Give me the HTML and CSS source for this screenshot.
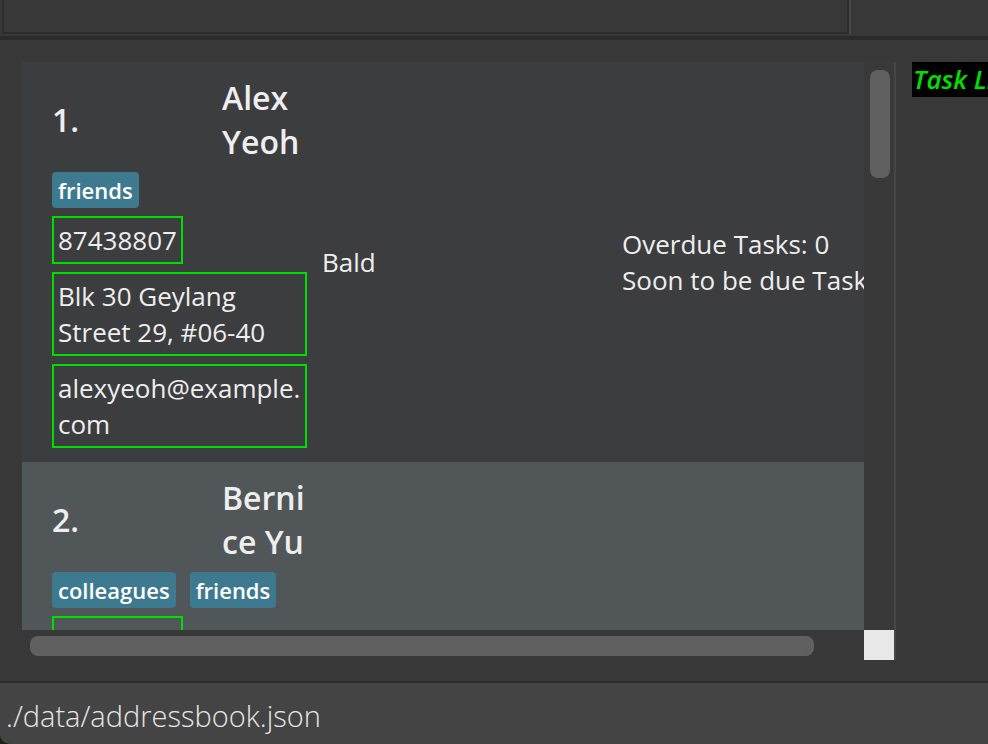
FILE: index.html
```html
<!DOCTYPE html>
<html>
<head>
<meta charset="utf-8">
<link rel="stylesheet" href="styles.css">
</head>
<body>
<div class="app">
  <div class="top">
    <div class="top-box"></div>
    <div class="top-divider"></div>
  </div>
  <div class="band"></div>
  <div class="main">
    <div class="list-pane">
      <div class="viewport">
        <div class="list">
          <div class="card card-odd">
            <div class="col-main">
              <div class="header">
                <div class="idx">1.</div>
                <div class="name">Alex Yeoh</div>
              </div>
              <div class="tags">
                <span class="tag">friends</span>
              </div>
              <div class="field">87438807</div>
              <div class="field">Blk 30 Geylang Street 29, #06-40</div>
              <div class="field field-mail">alexyeoh@example.<wbr>com</div>
            </div>
            <div class="col-remark">Bald</div>
            <div class="col-tasks">
              <div>Overdue Tasks: 0</div>
              <div>Soon to be due Tasks: 0</div>
            </div>
          </div>
          <div class="card card-even">
            <div class="col-main">
              <div class="header">
                <div class="idx">2.</div>
                <div class="name">Bernice Yu</div>
              </div>
              <div class="tags">
                <span class="tag">colleagues</span>
                <span class="tag">friends</span>
              </div>
              <div class="field">99272758</div>
              <div class="field">Blk 30 Lorong 3 Serangoon Gardens, #07-18</div>
              <div class="field field-mail">berniceyu@example.<wbr>com</div>
            </div>
            <div class="col-remark"></div>
            <div class="col-tasks">
              <div>Overdue Tasks: 0</div>
              <div>Soon to be due Tasks: 0</div>
            </div>
          </div>
        </div>
      </div>
      <div class="vbar"><div class="vthumb"></div></div>
      <div class="hbar"><div class="hthumb"></div></div>
      <div class="corner"></div>
    </div>
    <div class="pane-divider"></div>
    <div class="right">
      <div class="task-label">Task List</div>
    </div>
  </div>
  <div class="sep"></div>
  <div class="status">./data/addressbook.json</div>
</div>
</body>
</html>
```
FILE: styles.css
```css
* { box-sizing: border-box; }
html, body {
  margin: 0;
  padding: 0;
  background: #1b201b;
  width: 988px;
  height: 744px;
  overflow: hidden;
  font-family: "Open Sans", "DejaVu Sans", sans-serif;
}
.app {
  width: 988px;
  height: 744px;
  background: #383838;
  display: flex;
  flex-direction: column;
  border-bottom-left-radius: 10px;
  overflow: hidden;
}
.top {
  height: 34px;
  display: flex;
  flex: none;
}
.top-box {
  margin-left: 2px;
  width: 847px;
  height: 34px;
  border: 2px solid #2c2c2c;
  border-top: none;
}
.top-divider {
  width: 2px;
  height: 34px;
  background: #464646;
}
.band {
  flex: none;
  margin-top: 2px;
  height: 4px;
  background: #2b2b2b;
}
.main {
  flex: none;
  height: 641px;
  display: flex;
  padding-top: 22px;
}
.list-pane {
  margin-left: 22px;
  width: 872px;
  height: 598px;
  display: grid;
  grid-template-columns: 842px 30px;
  grid-template-rows: 568px 30px;
}
.viewport {
  overflow: hidden;
  width: 842px;
  height: 568px;
}
.list {
  width: 900px;
}
.card {
  display: flex;
  align-items: center;
  padding: 14px 0 14px 30px;
  color: #eeeeee;
}
.card-odd { background: #3c3d3f; }
.card-even { background: #515658; }
.col-main {
  width: 255px;
  flex: none;
  display: flex;
  flex-direction: column;
  gap: 8px;
}
.header {
  display: flex;
  align-items: center;
  font-weight: 600;
  font-size: 32px;
  line-height: 44px;
}
.idx {
  width: 170px;
  flex: none;
}
.name {
  width: 86px;
  word-break: break-all;
}
.tag {
  background: #3e7a8f;
  color: #ffffff;
  font-weight: 600;
  font-size: 22px;
  line-height: 28px;
  padding: 4px 6px;
  border-radius: 4px;
}
.tags {
  display: flex;
  gap: 14px;
}
.field {
  width: fit-content;
  max-width: 255px;
  border: 2px solid #00dd00;
  padding: 4px 4px;
  font-size: 26px;
  line-height: 36px;
}
.field-mail {
  overflow-wrap: anywhere;
}
.col-remark {
  flex: none;
  width: 300px;
  margin-left: 15px;
  font-size: 26px;
  line-height: 36px;
}
.col-tasks {
  flex: none;
  white-space: nowrap;
  font-size: 26px;
  line-height: 36px;
}
.vbar {
  background: #393939;
  padding: 8px 4px 0 6px;
}
.vthumb {
  width: 20px;
  height: 108px;
  background: #606060;
  border-radius: 8px;
}
.hbar {
  padding: 6px 0 0 8px;
}
.hthumb {
  width: 784px;
  height: 20px;
  background: #606060;
  border-radius: 8px;
}
.corner {
  background: #e8e8e8;
}
.pane-divider {
  flex: none;
  width: 2px;
  height: 598px;
  background: #464646;
}
.right {
  flex: 1;
  padding-left: 16px;
  overflow: hidden;
}
.task-label {
  background: #000000;
  color: #00e000;
  font-weight: 600;
  font-style: italic;
  font-size: 26px;
  line-height: 35px;
  height: 35px;
  padding-left: 1px;
  white-space: nowrap;
  width: 200px;
}
.sep {
  flex: none;
  height: 2px;
  background: #2b2b2b;
}
.status {
  flex: 1;
  background: #444444;
  color: #e6e6e6;
  font-size: 29px;
  font-weight: 300;
  padding-left: 6px;
  padding-top: 5px;
  line-height: 56px;
  white-space: nowrap;
}
```
